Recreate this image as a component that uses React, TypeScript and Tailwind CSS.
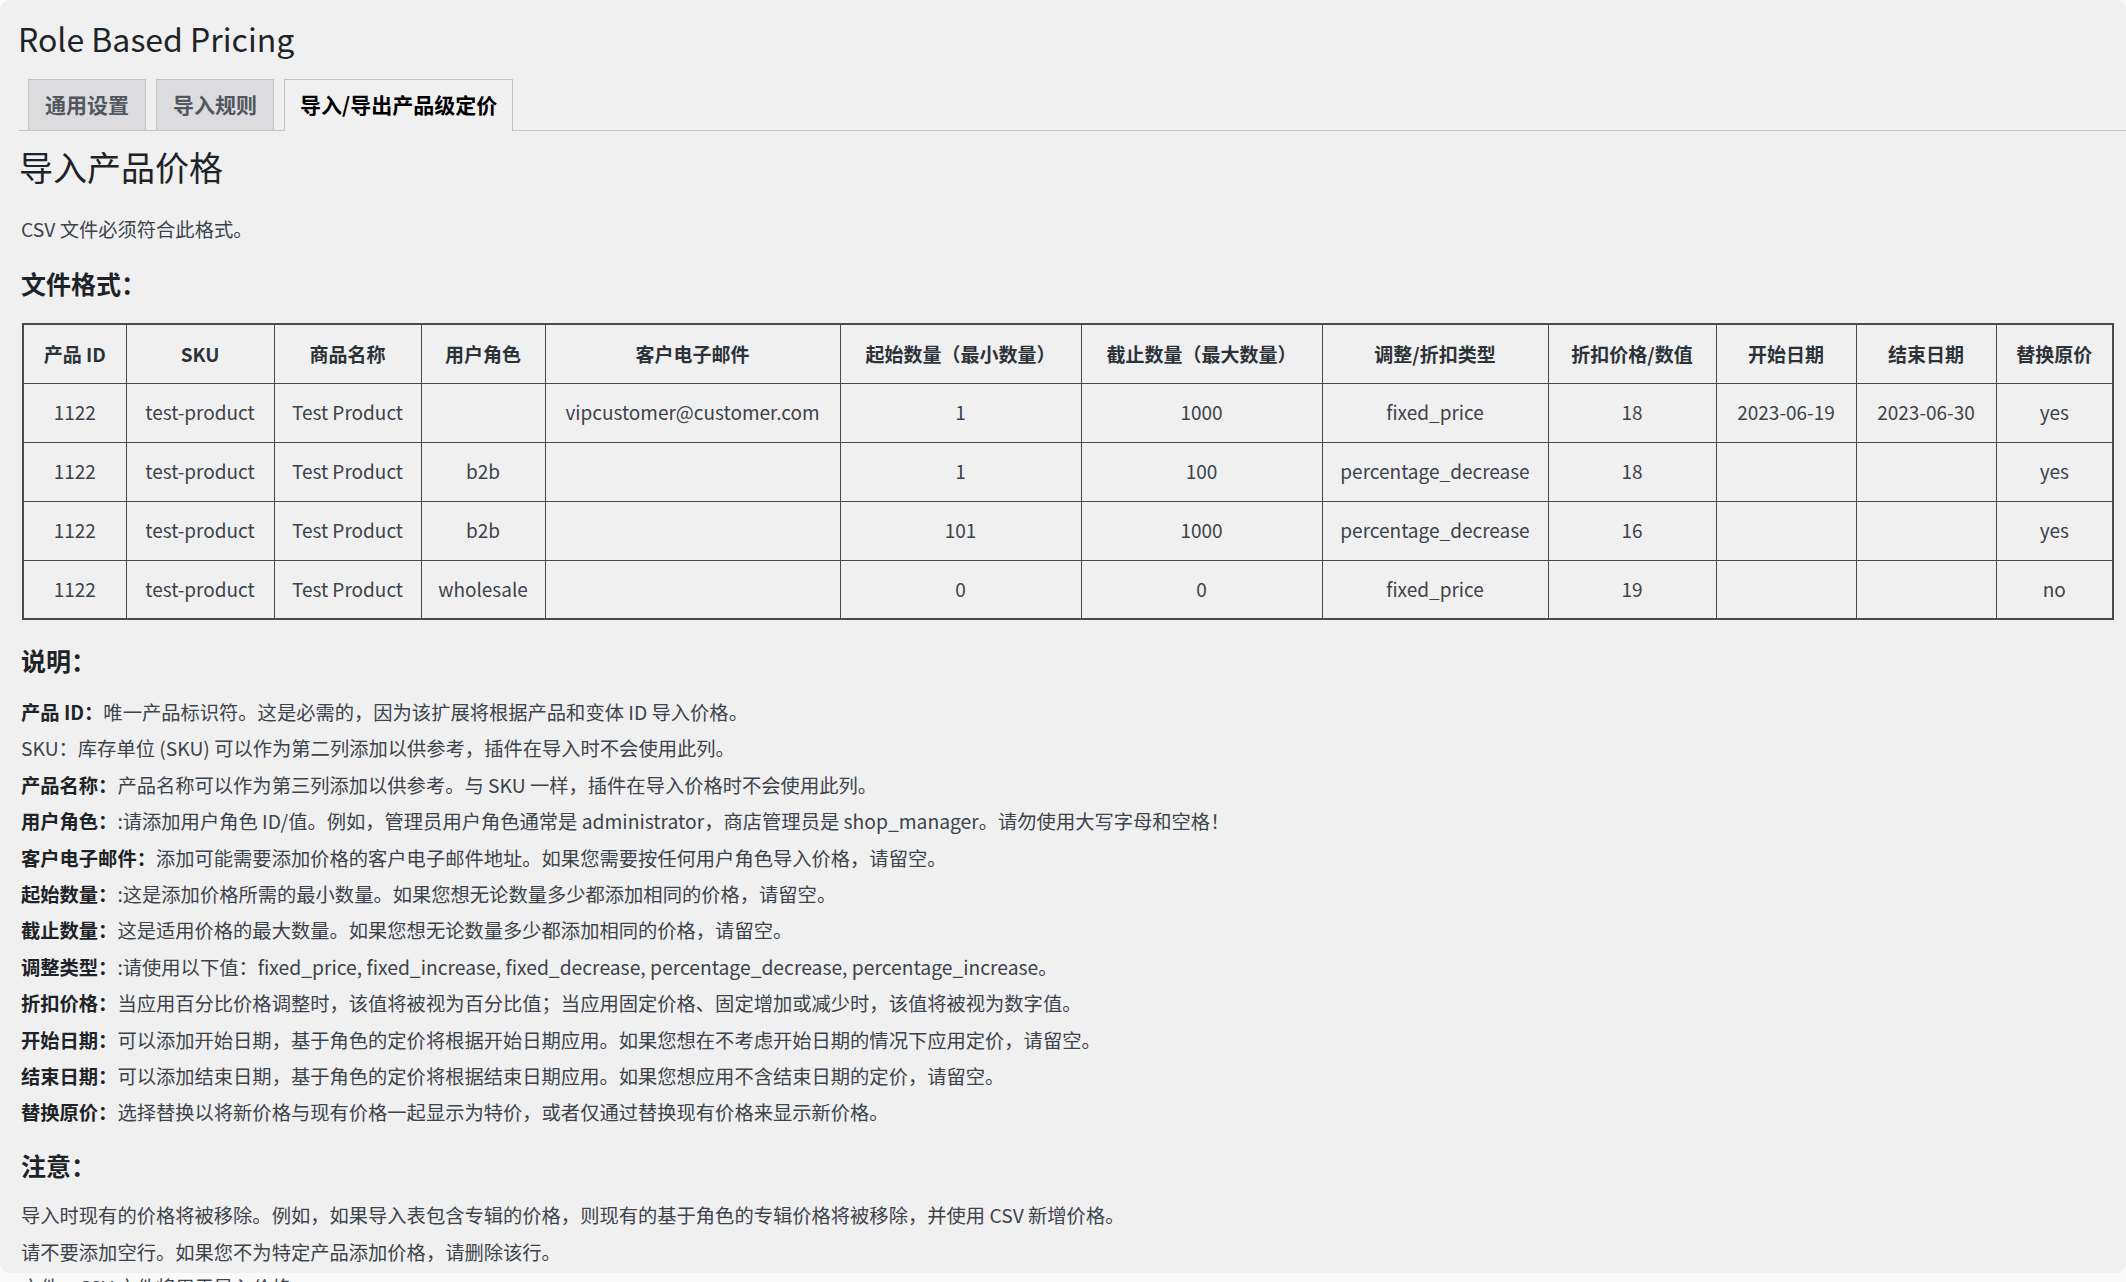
import React from 'react';

const COLS = [103, 148, 147, 124, 295, 241, 241, 226, 168, 140, 140, 117];

const HEADERS = [
  '产品 ID',
  'SKU',
  '商品名称',
  '用户角色',
  '客户电子邮件',
  '起始数量（最小数量）',
  '截止数量（最大数量）',
  '调整/折扣类型',
  '折扣价格/数值',
  '开始日期',
  '结束日期',
  '替换原价',
];

const ROWS = [
  ['1122', 'test-product', 'Test Product', '', 'vipcustomer@customer.com', '1', '1000', 'fixed_price', '18', '2023-06-19', '2023-06-30', 'yes'],
  ['1122', 'test-product', 'Test Product', 'b2b', '', '1', '100', 'percentage_decrease', '18', '', '', 'yes'],
  ['1122', 'test-product', 'Test Product', 'b2b', '', '101', '1000', 'percentage_decrease', '16', '', '', 'yes'],
  ['1122', 'test-product', 'Test Product', 'wholesale', '', '0', '0', 'fixed_price', '19', '', '', 'no'],
];

// [label, text, bold label]
const NOTES: [string, string, boolean][] = [
  ['产品 ID：', '唯一产品标识符。这是必需的，因为该扩展将根据产品和变体 ID 导入价格。', true],
  ['SKU：', '库存单位 (SKU) 可以作为第二列添加以供参考，插件在导入时不会使用此列。', false],
  ['产品名称：', '产品名称可以作为第三列添加以供参考。与 SKU 一样，插件在导入价格时不会使用此列。', true],
  ['用户角色：', ':请添加用户角色 ID/值。例如，管理员用户角色通常是 administrator，商店管理员是 shop_manager。请勿使用大写字母和空格！', true],
  ['客户电子邮件：', '添加可能需要添加价格的客户电子邮件地址。如果您需要按任何用户角色导入价格，请留空。', true],
  ['起始数量：', ':这是添加价格所需的最小数量。如果您想无论数量多少都添加相同的价格，请留空。', true],
  ['截止数量：', '这是适用价格的最大数量。如果您想无论数量多少都添加相同的价格，请留空。', true],
  ['调整类型：', ':请使用以下值：fixed_price, fixed_increase, fixed_decrease, percentage_decrease, percentage_increase。', true],
  ['折扣价格：', '当应用百分比价格调整时，该值将被视为百分比值；当应用固定价格、固定增加或减少时，该值将被视为数字值。', true],
  ['开始日期：', '可以添加开始日期，基于角色的定价将根据开始日期应用。如果您想在不考虑开始日期的情况下应用定价，请留空。', true],
  ['结束日期：', '可以添加结束日期，基于角色的定价将根据结束日期应用。如果您想应用不含结束日期的定价，请留空。', true],
  ['替换原价：', '选择替换以将新价格与现有价格一起显示为特价，或者仅通过替换现有价格来显示新价格。', true],
];

function Tabs() {
  return (
    <div className="mt-[21px] mr-[-7px] ml-[-2px] flex items-end border-b border-[#c3c4c7] pl-[9px]">
      <div className="flex h-[51px] items-center border border-b-0 border-[#c3c4c7] bg-[#dcdcde] px-[16px] text-[21px] font-semibold text-[#50575e]">
        通用设置
      </div>
      <div className="ml-[10px] flex h-[51px] items-center border border-b-0 border-[#c3c4c7] bg-[#dcdcde] px-[16px] text-[21px] font-semibold text-[#50575e]">
        导入规则
      </div>
      <div className="-mb-px ml-[10px] flex h-[52px] items-center border border-b-0 border-[#c3c4c7] bg-[#f0f0f1] px-[15px] pb-px text-[21px] font-semibold text-black">
        导入/导出产品级定价
      </div>
    </div>
  );
}

function PriceTable() {
  return (
    <table className="mt-[25px] ml-px w-[2091px] table-fixed border-collapse border-2 border-[#4a4a4a] text-center text-[19px]">
      <colgroup>
        {COLS.map((w, i) => (
          <col key={i} style={{ width: w }} />
        ))}
      </colgroup>
      <thead>
        <tr>
          {HEADERS.map((h) => (
            <th key={h} className="h-[59px] border border-[#4a4a4a] px-2 font-bold text-[#2c3338]">
              {h}
            </th>
          ))}
        </tr>
      </thead>
      <tbody>
        {ROWS.map((row, r) => (
          <tr key={r}>
            {row.map((c, i) => (
              <td key={i} className="h-[59px] border border-[#4a4a4a] px-2 whitespace-nowrap text-[#3c434a]">
                {c}
              </td>
            ))}
          </tr>
        ))}
      </tbody>
    </table>
  );
}

export default function App() {
  return (
    <div className="h-[1282px] overflow-hidden bg-[#fafafa] font-['Noto_Sans_CJK_SC','Noto_Sans',sans-serif] text-[#3c434a]">
      <div className="h-[1273px] overflow-hidden rounded-[10px] bg-[#f0f0f1] pl-[21px]">
        {/* Page title */}
        <h1 className="ml-[-3px] pt-[18px] text-[32px] leading-[40px] font-normal text-[#1d2327]">Role Based Pricing</h1>

        <Tabs />

        <h2 className="mt-[14px] ml-[-2px] text-[34px] leading-[44px] font-normal text-[#1d2327]">导入产品价格</h2>
        <p className="mt-[26px] text-[19.3px] leading-[28px]">CSV 文件必须符合此格式。</p>

        <h3 className="mt-[25px] text-[25px] leading-[30px] font-bold text-[#1d2327]">文件格式：</h3>

        <PriceTable />

        <h3 className="mt-[25px] text-[25px] leading-[30px] font-bold text-[#1d2327]">说明：</h3>
        <div className="mt-[19px] flex flex-col text-[19.3px] leading-[36.4px]">
          {NOTES.map(([label, text, bold]) => (
            <p key={label}>
              <span className={bold ? 'font-bold text-[#1d2327]' : ''}>{label}</span>
              {text}
            </p>
          ))}
        </div>

        <h3 className="mt-[19px] text-[25px] leading-[30px] font-bold text-[#1d2327]">注意：</h3>
        <div className="mt-[17px] text-[19.3px] leading-[37px]">
          <p>导入时现有的价格将被移除。例如，如果导入表包含专辑的价格，则现有的基于角色的专辑价格将被移除，并使用 CSV 新增价格。</p>
          <p>请不要添加空行。如果您不为特定产品添加价格，请删除该行。</p>
        </div>
      </div>
      <p className="pl-[21px] text-[19.3px] leading-[28px]">文件：CSV 文件将用于导入价格。</p>
    </div>
  );
}
